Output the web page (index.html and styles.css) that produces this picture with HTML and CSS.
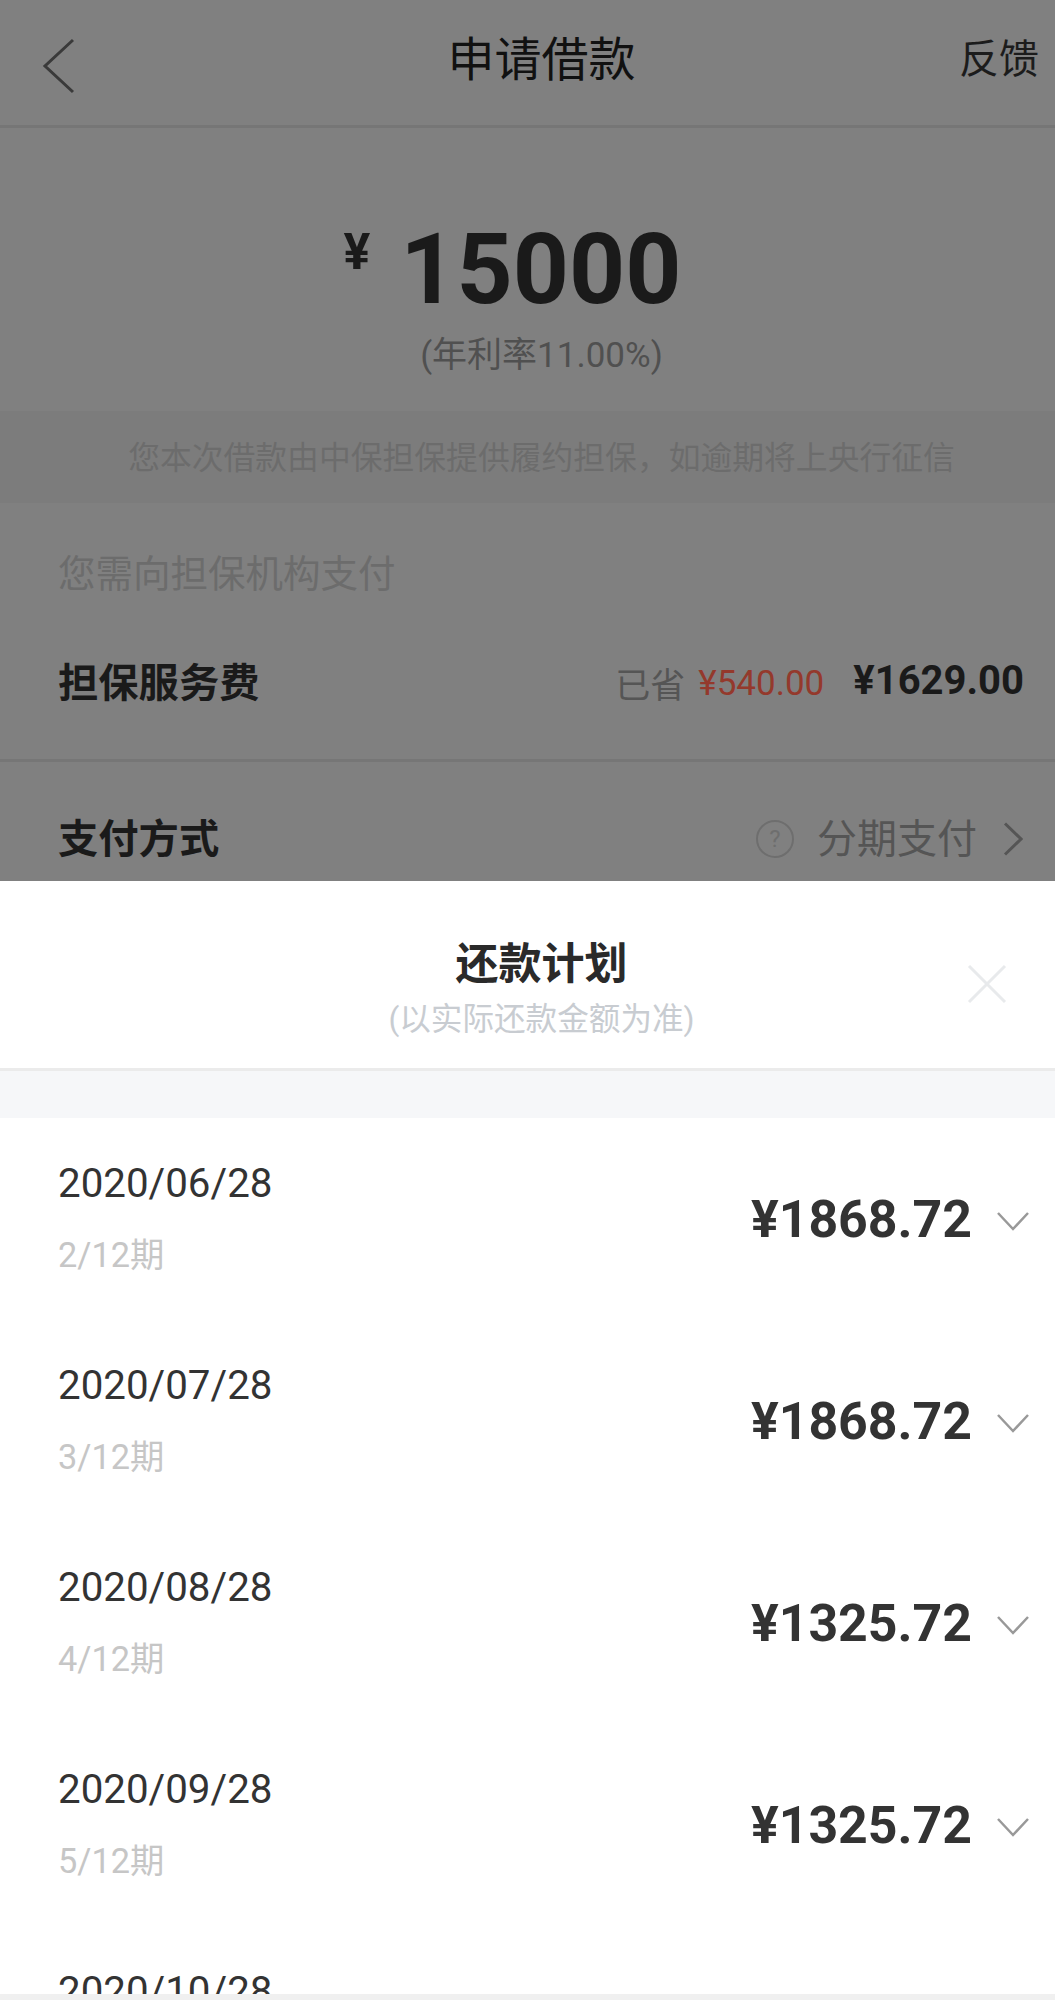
FILE: index.html
```html
<!DOCTYPE html>
<html>
<head>
  <meta charset="utf-8">
  <title>申请借款</title>
  <link rel="stylesheet" href="styles.css">
</head>
<body>
  <div class="page">
    <header class="topbar">
      <svg class="back" width="34" height="56" viewBox="0 0 34 56"><path d="M31 2 L3 28 L31 54" /></svg>
      <h1 class="topbar-title">申请借款</h1>
      <a class="topbar-link">反馈</a>
    </header>

    <section class="summary">
      <div class="amount"><span class="amount-sign">¥</span><span class="amount-num">15000</span></div>
      <div class="rate">(年利率11.00%)</div>
    </section>

    <div class="notice">您本次借款由中保担保提供履约担保，如逾期将上央行征信</div>

    <section class="fee">
      <div class="fee-hint">您需向担保机构支付</div>
      <div class="fee-row">
        <span class="label">担保服务费</span>
        <span class="saved">已省</span>
        <span class="saved-money">¥540.00</span>
        <span class="fee-money">¥1629.00</span>
      </div>
    </section>

    <section class="pay">
      <span class="label">支付方式</span>
      <span class="help">?</span>
      <span class="pay-value">分期支付</span>
      <svg class="more" width="20" height="34" viewBox="0 0 20 34"><path d="M2 1.5 L18 17 L2 32.5" /></svg>
    </section>

    <section class="sheet">
      <div class="sheet-head">
        <h2 class="sheet-title">还款计划</h2>
        <div class="sheet-sub">(以实际还款金额为准)</div>
        <svg class="close" width="40" height="40" viewBox="0 0 40 40"><path d="M2 2 L38 38 M38 2 L2 38" /></svg>
      </div>
      <div class="sheet-gap"></div>
      <div class="plan">
        <div class="plan-row">
          <div class="plan-left">
            <div class="plan-date">2020/06/28</div>
            <div class="plan-term">2/12期</div>
          </div>
          <div class="plan-money">¥1868.72</div>
          <svg class="down" width="34" height="20" viewBox="0 0 34 20"><path d="M2 2 L17 18 L32 2" /></svg>
        </div>
        <div class="plan-row">
          <div class="plan-left">
            <div class="plan-date">2020/07/28</div>
            <div class="plan-term">3/12期</div>
          </div>
          <div class="plan-money">¥1868.72</div>
          <svg class="down" width="34" height="20" viewBox="0 0 34 20"><path d="M2 2 L17 18 L32 2" /></svg>
        </div>
        <div class="plan-row">
          <div class="plan-left">
            <div class="plan-date">2020/08/28</div>
            <div class="plan-term">4/12期</div>
          </div>
          <div class="plan-money">¥1325.72</div>
          <svg class="down" width="34" height="20" viewBox="0 0 34 20"><path d="M2 2 L17 18 L32 2" /></svg>
        </div>
        <div class="plan-row">
          <div class="plan-left">
            <div class="plan-date">2020/09/28</div>
            <div class="plan-term">5/12期</div>
          </div>
          <div class="plan-money">¥1325.72</div>
          <svg class="down" width="34" height="20" viewBox="0 0 34 20"><path d="M2 2 L17 18 L32 2" /></svg>
        </div>
        <div class="plan-row">
          <div class="plan-left">
            <div class="plan-date">2020/10/28</div>
          </div>
        </div>
      </div>
      <div class="bottom-strip"></div>
    </section>
  </div>
</body>
</html>
```

FILE: styles.css
```css
body {
  margin: 0;
  padding: 0;
  font-family: Roboto, 'Noto Sans CJK SC', sans-serif;
  background: #808080;
}
h1, h2 {
  margin: 0;
  font-weight: normal;
}
svg path {
  fill: none;
}
.page {
  width: 1055px;
  height: 2000px;
  overflow: hidden;
  display: flex;
  flex-direction: column;
  background: #808080;
}

/* top bar */
.topbar {
  height: 125px;
  flex: none;
  display: flex;
  align-items: center;
  justify-content: space-between;
  padding: 0 16px 0 42px;
  border-bottom: 3px solid #767676;
}
.back {
  margin-top: 7px;
}
.back path {
  stroke: #3a3a3a;
  stroke-width: 3;
}
.topbar-title {
  font-size: 47px;
  color: #111;
  margin-left: 48px;
  margin-bottom: 14px;
}
.topbar-link {
  font-size: 40px;
  color: #1c1c1c;
  margin-bottom: 14px;
}

/* amount */
.summary {
  height: 283px;
  flex: none;
  box-sizing: border-box;
  padding-left: 28px;
  display: flex;
  flex-direction: column;
  align-items: center;
}
.amount {
  display: flex;
  align-items: flex-start;
  margin-top: 86px;
  margin-right: 58px;
  height: 112px;
  color: #1a1a1a;
  font-weight: bold;
}
.amount-sign {
  font-size: 50px;
  line-height: 60px;
  margin-top: 8px;
  margin-right: 30px;
}
.amount-num {
  font-size: 98px;
  line-height: 112px;
}
.rate {
  font-size: 35px;
  line-height: 50px;
  color: #505050;
  margin-top: 5px;
}
.notice {
  height: 92px;
  flex: none;
  box-sizing: border-box;
  padding: 0 0 5px 28px;
  display: flex;
  align-items: center;
  justify-content: center;
  font-size: 31.8px;
  color: #6c6c6c;
  background: #7c7c7c;
}

/* fee */
.fee {
  height: 259px;
  flex: none;
  box-sizing: border-box;
  padding: 46px 31px 0 58px;
  border-bottom: 3px solid #767676;
}
.fee-hint {
  font-size: 37.5px;
  line-height: 50px;
  color: #6c6c6c;
}
.fee-row {
  display: flex;
  align-items: center;
  margin-top: 58px;
  height: 50px;
}
.label {
  font-size: 40.3px;
  font-weight: bold;
  color: #1a1a1a;
  margin-right: auto;
  margin-bottom: 5px;
}
.saved {
  font-size: 35px;
  color: #555;
  margin-top: 1px;
}
.saved-money {
  font-size: 35px;
  color: #94392c;
  margin-left: 13px;
  margin-top: 3px;
}
.fee-money {
  font-size: 40px;
  font-weight: bold;
  color: #1a1a1a;
  margin-left: 29px;
  margin-bottom: 3px;
}
.pay {
  height: 119px;
  flex: none;
  box-sizing: border-box;
  display: flex;
  align-items: center;
  padding: 34px 32px 0 58px;
}
.pay .label {
  margin-bottom: 7px;
}
.help {
  width: 38px;
  height: 38px;
  box-sizing: border-box;
  border: 2.5px solid #6e6e6e;
  border-radius: 50%;
  display: flex;
  align-items: center;
  justify-content: center;
  font-size: 24px;
  color: #6e6e6e;
}
.pay-value {
  font-size: 40px;
  color: #555;
  margin-left: 23px;
  margin-bottom: 5px;
}
.more {
  margin-left: 26px;
}
.more path {
  stroke: #555;
  stroke-width: 3;
}

/* repayment sheet */
.sheet {
  flex: 1;
  background: #fff;
  display: flex;
  flex-direction: column;
  min-height: 0;
  position: relative;
}
.sheet-head {
  height: 187px;
  flex: none;
  box-sizing: content-box;
  position: relative;
  padding-left: 28px;
  text-align: center;
  border-bottom: 3px solid #ebebeb;
}
.sheet-title {
  font-size: 43px;
  font-weight: bold;
  color: #2a2a2a;
  line-height: 60px;
  padding-top: 53px;
}
.sheet-sub {
  font-size: 31.6px;
  line-height: 44px;
  color: #c8ccd1;
  margin-top: 4px;
}
.close {
  position: absolute;
  right: 48px;
  top: 83px;
}
.close path {
  stroke: #e8eaec;
  stroke-width: 3;
}
.sheet-gap {
  height: 47px;
  flex: none;
  background: #f6f7f9;
}
.plan-row {
  height: 202px;
  box-sizing: border-box;
  display: flex;
  align-items: center;
  padding: 0 25px 0 58px;
}
.plan-left {
  margin-right: auto;
  margin-bottom: 3px;
}
.plan-date {
  font-size: 40.3px;
  line-height: 50px;
  color: #333;
}
.plan-term {
  font-size: 34.3px;
  line-height: 44px;
  color: #c6c6c6;
  margin-top: 24px;
}
.plan-row:last-child {
  align-items: flex-start;
  padding-top: 41px;
}
.plan-money {
  font-size: 51.8px;
  font-weight: bold;
  color: #333;
}
.down {
  margin-left: 24px;
  margin-top: 4px;
}
.down path {
  stroke: #999;
  stroke-width: 2.5;
}
.bottom-strip {
  position: absolute;
  left: 0;
  right: 0;
  bottom: 0;
  height: 6px;
  background: #f0f0f0;
}
```
